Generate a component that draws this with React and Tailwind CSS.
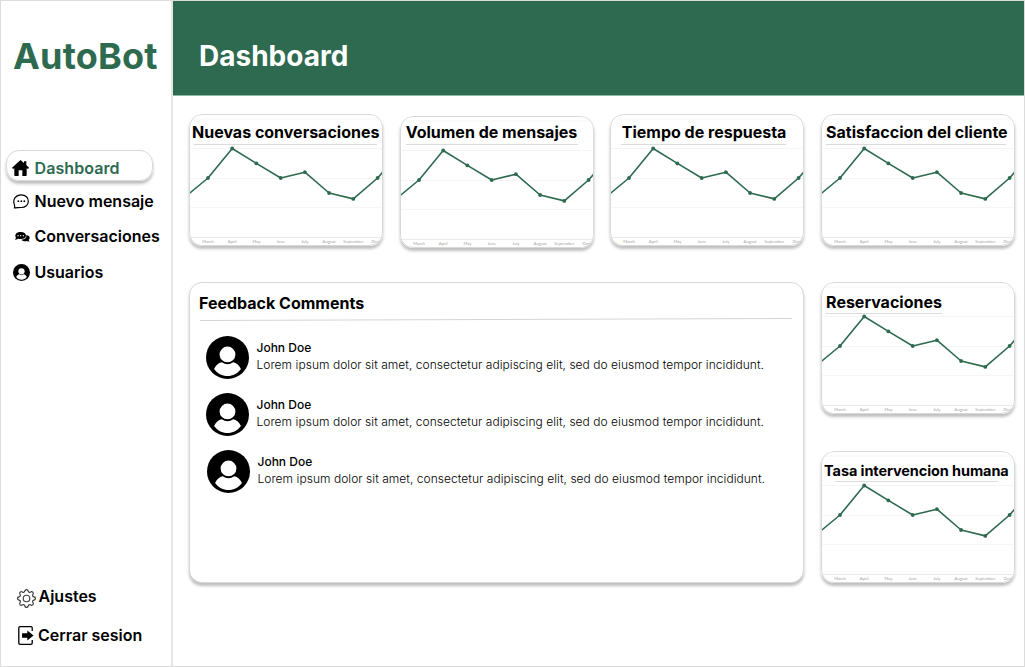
import React from "react";
import { BsGear } from "react-icons/bs";

const months = [
  ["March", 19], ["April", 43.2], ["May", 67.4], ["June", 91.7],
  ["July", 115.9], ["August", 140.1], ["September", 164.3], ["Octo", 187],
];
const points = [
  [19, 64], [43.2, 34.5], [67.4, 49.4], [91.7, 64],
  [115.9, 58.2], [140.1, 79], [164.3, 84.9], [188.6, 64],
];

function LineChart() {
  return (
    <svg viewBox="0 0 194 132" className="absolute inset-0 h-[132px] w-[194px]" aria-hidden="true">
      {[5, 34.5, 64.5, 93.5].map((y) => (
        <path key={y} d={`M0 ${y}H194`} stroke="#f5f5f5" strokeWidth="1" />
      ))}
      <path d="M0 123.5H194" stroke="#e9e9e9" strokeWidth="1" />
      <path
        d={"M0 79.7 " + points.map(([x, y]) => `L${x} ${y}`).join(" ") + " L194 57.7"}
        fill="none" stroke="#2d6a4f" strokeWidth="1.6" strokeLinejoin="round"
      />
      {points.map(([x, y]) => (
        <circle key={x} cx={x} cy={y} r="1.9" fill="#2d6a4f" />
      ))}
      {months.map(([m, x]) => (
        <text key={m} x={x} y="129" textAnchor="middle" className="fill-[#a3a3a3] font-['Lato',sans-serif] text-[4.2px]">
          {m}
        </text>
      ))}
    </svg>
  );
}

function StatCard({ title, card = "", heading, rule }) {
  return (
    <section className={`relative h-[132px] w-[194px] overflow-hidden rounded-[13px] bg-white ${card}`}>
      <LineChart />
      <h2 className={`relative whitespace-nowrap leading-5 ${heading}`}>{title}</h2>
      <div className={`relative h-px bg-[#dcdcdc] ${rule}`} />
      <div className="pointer-events-none absolute inset-0 rounded-[13px] border border-[#d9d9d9]" />
    </section>
  );
}

function UserIcon({ className }) {
  return (
    <svg viewBox="0 0 128 128" className={className} aria-hidden="true">
      <circle cx="64" cy="64" r="64" fill="#000" />
      <circle cx="64" cy="55" r="23.5" fill="#fff" />
      <path d="M24 98C29 88 37 80 47 78Q64 90 81 78C91 80 99 88 104 98C94 111 80 119 64 119S34 111 24 98Z" fill="#fff" />
    </svg>
  );
}

function HomeIcon({ className }) {
  return (
    <svg viewBox="0 0 51 48" className={className} aria-hidden="true">
      <path d="M25.5 0 36 9V4h7v11l8 8-3 4-4-2v21q0 2-2 2H31V31H20v17H9q-2 0-2-2V25l-4 2-3-4Z" />
    </svg>
  );
}

function ChatIcon({ className }) {
  return (
    <svg viewBox="0 0 48 44" className={className} aria-hidden="true">
      <path d="M4 41C6 38 5 35 4 31C-2 15 9 2 25 2C38 2 46 11 46 21C46 32 37 40 25 40C17 40 12 41 4 41Z" fill="none" stroke="#000" strokeWidth="3.6" strokeLinejoin="round" />
      <circle cx="16" cy="21" r="2.8" /><circle cx="25" cy="21" r="2.8" /><circle cx="34" cy="21" r="2.8" />
    </svg>
  );
}

function CommentsIcon({ className }) {
  return (
    <svg viewBox="0 0 45 30" className={className} aria-hidden="true">
      <path d="M34 9C42 10 45 15 44 19C43 22 42 23 41 24L44 29C40 29 38 28 36 27C28 29 21 26 19 23C29 23 35 18 34 9Z" />
      <path d="M17 0C27 0 33 5 33 11S26 21 17 21C14 21 12 21 9 20C7 22 4 23 0 23L3 17C-3 8 5 0 17 0Z" />
      <circle cx="9" cy="11" r="2" fill="#fff" /><circle cx="17" cy="11" r="2" fill="#fff" /><circle cx="25" cy="11" r="2" fill="#fff" />
    </svg>
  );
}

function ExitIcon({ className }) {
  return (
    <svg viewBox="0 0 48 58" className={className} aria-hidden="true">
      <path d="M43 15V6q0-4-4-4H6Q2 2 2 6v46q0 4 4 4h33q4 0 4-4v-9" fill="none" stroke="#000" strokeWidth="4" />
      <path d="M12 22h16v-8l19 15-19 15v-8H12Z" />
    </svg>
  );
}

function NavItem({ icon, label, className }) {
  return (
    <a className={`flex items-center whitespace-nowrap text-[16px] leading-5 font-semibold ${className}`}>
      {icon}
      <span>{label}</span>
    </a>
  );
}

function Comment({ className = "" }) {
  return (
    <article className={`flex h-[43px] gap-[7.5px] ${className}`}>
      <UserIcon className="size-[43px] shrink-0" />
      <div className="mt-[3px] whitespace-nowrap text-[12px]">
        <h3 className="leading-[17px] font-medium">John Doe</h3>
        <p className="leading-[17px] font-light tracking-[0.04px]">
          Lorem ipsum dolor sit amet, consectetur adipiscing elit, sed do eiusmod tempor incididunt.
        </p>
      </div>
    </article>
  );
}

export default function App() {
  const shadow = "shadow-[0_3px_3px_rgba(0,0,0,0.25)]";
  return (
    <div className="flex h-[667px] w-[1025px] overflow-hidden border border-[#dcdcdc] bg-white font-['Inter',sans-serif] text-black">
      <aside className="flex w-[172px] shrink-0 flex-col border-r-2 border-[#e6e6e6]">
        <div className="mt-[33px] pl-[12px] text-[36px] leading-[44px] font-bold tracking-[0.2px] text-[#2d6a4f]">AutoBot</div>
        <nav className="mt-[72px] flex flex-col">
          <NavItem
            label="Dashboard"
            icon={<HomeIcon className="mr-[5.5px] h-[16px] w-[17px] text-black" />}
            className={`ml-[5px] h-[31px] w-[147px] rounded-[13px] border border-[#d9d9d9] pl-[5px] pt-[4px] tracking-[0.08px] text-[#2d6a4f] ${shadow}`}
          />
          <NavItem label="Nuevo mensaje" icon={<ChatIcon className="mr-[5.5px] h-[15px] w-[16px]" />} className="mt-[10px] pl-[12px]" />
          <NavItem label="Conversaciones" icon={<CommentsIcon className="mr-[4.5px] mt-[2px] h-[10px] w-[15px]" />} className="mt-[15px] pl-[14px]" />
          <NavItem label="Usuarios" icon={<UserIcon className="mr-[4.5px] size-[17px]" />} className="mt-[16px] pl-[12px]" />
        </nav>
        <div className="mt-auto mb-[21px] flex flex-col gap-[18px]">
          <NavItem label="Ajustes" icon={<BsGear className="mt-[4px] mr-[2.5px] size-[19px] stroke-white stroke-[0.3]" />} className="relative -top-px h-5 pl-[16px]" />
          <NavItem label="Cerrar sesion" icon={<ExitIcon className="mr-[4px] h-[19px] w-[16px]" />} className="pl-[17px]" />
        </div>
      </aside>

      <main className="flex-1">
        <header className="flex h-[95px] items-center border-b border-[#8fb9a3] bg-[#2d6a4f] pt-[15px] pl-[26px]">
          <h1 className="text-[28px] leading-[34px] font-bold text-white">Dashboard</h1>
        </header>
        <div className="mt-[18px] ml-[16px] grid grid-cols-[repeat(4,194px)] grid-rows-[132px_132px_132px] gap-x-[16.7px] gap-y-[36.3px]">
          <StatCard title="Nuevas conversaciones" card={shadow} heading="mt-[8px] ml-[3px] text-[16px] font-bold" rule="mt-[2px] ml-[5px] w-[183px]" />
          <StatCard title="Volumen de mensajes" card={`top-[2px] ${shadow}`} heading="mt-[6px] ml-[6px] text-[16px] font-bold" rule="mt-[2px] ml-[6px] w-[172px]" />
          <StatCard title="Tiempo de respuesta" card={shadow} heading="mt-[8px] ml-[11.4px] text-[16px] font-bold" rule="mt-[2px] ml-[11px] w-[165px]" />
          <StatCard title="Satisfaccion del cliente" card={shadow} heading="mt-[8px] ml-[5px] text-[16px] font-bold" rule="mt-[2px] ml-[5px] w-[180px]" />
          <section className={`col-span-3 row-span-2 rounded-[13px] border border-[#d9d9d9] bg-white pt-[10px] pl-[9px] ${shadow}`}>
            <h2 className="text-[16px] leading-5 font-bold">Feedback Comments</h2>
            <svg viewBox="0 0 592 3" className="mt-[5px] ml-px h-[3px] w-[592px]" aria-hidden="true">
              <path d="M0 2.5L592 .5" stroke="#d4d4d4" />
            </svg>
            <div className="mt-[15px] ml-[7px] flex flex-col gap-[14px]">
              <Comment />
              <Comment />
              <Comment className="ml-px" />
            </div>
          </section>
          <StatCard title="Reservaciones" card={shadow} heading="mt-[10px] ml-[5px] text-[16px] font-bold" rule="mt-[1px] ml-[5px] w-[116px]" />
          <StatCard title="Tasa intervencion humana" card={shadow} heading="mt-[10px] ml-[3px] text-[14.5px] font-bold tracking-[-0.1px]" rule="ml-[14px] w-[163px]" />
        </div>
      </main>
    </div>
  );
}
